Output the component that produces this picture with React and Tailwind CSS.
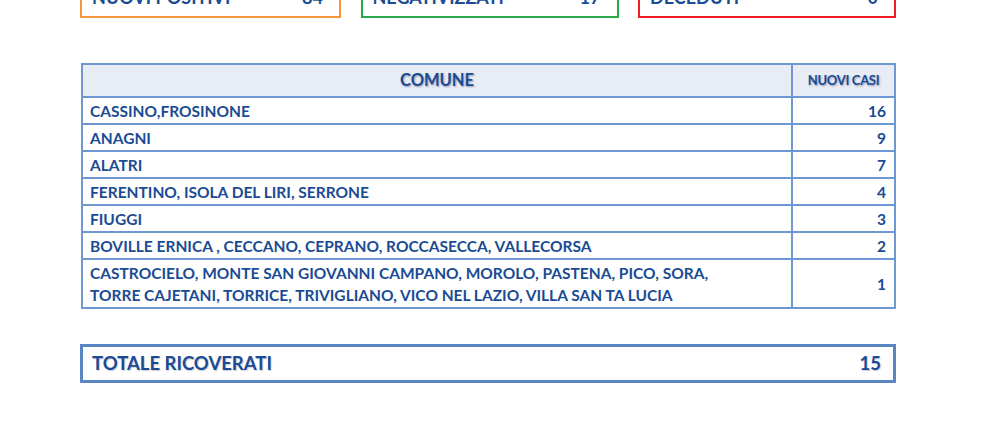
const ROWS = [
  { comune: ['CASSINO,FROSINONE'], casi: 16 },
  { comune: ['ANAGNI'], casi: 9 },
  { comune: ['ALATRI'], casi: 7 },
  { comune: ['FERENTINO, ISOLA DEL LIRI, SERRONE'], casi: 4 },
  { comune: ['FIUGGI'], casi: 3 },
  { comune: ['BOVILLE ERNICA , CECCANO, CEPRANO, ROCCASECCA, VALLECORSA'], casi: 2 },
  {
    comune: [
      'CASTROCIELO, MONTE SAN GIOVANNI CAMPANO, MOROLO, PASTENA, PICO, SORA,',
      'TORRE CAJETANI, TORRICE, TRIVIGLIANO, VICO NEL LAZIO, VILLA SAN TA LUCIA',
    ],
    casi: 1,
  },
]

const STATS = [
  { label: 'NUOVI POSITIVI', value: 84, cls: 'w-[261px] border-[#f5983a]' },
  { label: 'NEGATIVIZZATI', value: 17, cls: 'w-[258px] border-[#2aa84a]' },
  { label: 'DECEDUTI', value: 0, cls: 'w-[258px] border-[#ee1c24]' },
]

export default function App() {
  return (
    <div
      className="w-[990px] h-[440px] bg-white overflow-hidden text-[#1a4b93] font-bold"
      style={{ fontFamily: 'Lato, "Open Sans", sans-serif' }}
    >
      {/* stat boxes, cut off at top */}
      <div className="flex gap-[19.5px] pl-[80px] mt-[-23px]">
        {STATS.map(s => (
          <div
            key={s.label}
            className={`h-[41px] border-2 ${s.cls} flex items-center justify-between pl-[10px] pr-[16px] text-[18px]`}
          >
            <span>{s.label}</span>
            <span>{s.value}</span>
          </div>
        ))}
      </div>

      {/* table */}
      <div className="ml-[81px] mt-[45px] w-[815px] border-2 border-[#6d98d3]">
        <div className="flex h-[33px] bg-[#e8ecf4] border-b-2 border-[#6d98d3]">
          <div className="w-[710px] flex items-center justify-center border-r-2 border-[#6d98d3] text-[16.5px] [text-shadow:1px_1px_2px_rgba(0,0,60,0.35)]">
            COMUNE
          </div>
          <div className="flex-1 flex items-center justify-center text-[13px] tracking-[-0.3px] [text-shadow:1px_1px_2px_rgba(0,0,60,0.35)]">
            NUOVI CASI
          </div>
        </div>
        {ROWS.map((r, i) => (
          <div
            key={i}
            className={`flex text-[15.5px] leading-[22px] ${i < ROWS.length - 1 ? 'border-b-2 border-[#6d98d3]' : ''}`}
          >
            <div className={`w-[710px] border-r-2 border-[#6d98d3] pl-[7px] flex flex-col justify-center ${r.comune.length > 1 ? 'h-[47px]' : 'h-[25px]'}`}>
              {r.comune.map(line => (
                <span key={line}>{line}</span>
              ))}
            </div>
            <div className="flex-1 flex items-center justify-end pr-[8px]">{r.casi}</div>
          </div>
        ))}
      </div>

      {/* totale */}
      <div className="ml-[80px] mt-[35px] w-[816px] h-[39px] border-[3px] border-[#5b86c6] flex items-center justify-between pl-[9px] pr-[12px] text-[18.5px] [text-shadow:1px_1px_1px_rgba(0,0,60,0.2)]">
        <span>TOTALE RICOVERATI</span>
        <span>15</span>
      </div>
    </div>
  )
}
